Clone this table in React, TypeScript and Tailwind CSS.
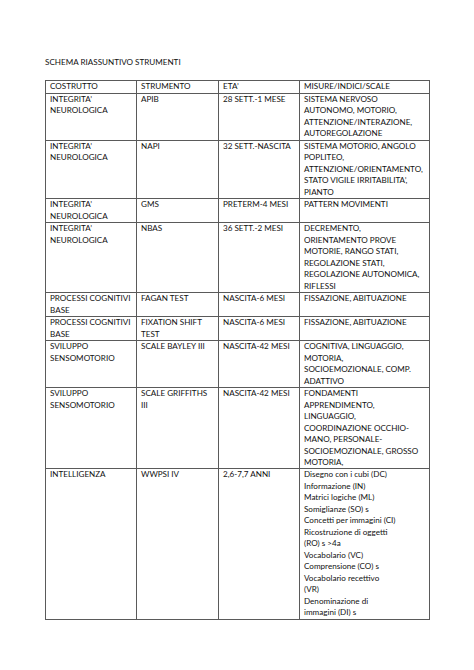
const rows: [string[], string[], string[], string[]][] = [
  [["INTEGRITA’", "NEUROLOGICA"], ["APIB"], ["28 SETT.-1 MESE"], ["SISTEMA NERVOSO", "AUTONOMO, MOTORIO,", "ATTENZIONE/INTERAZIONE,", "AUTOREGOLAZIONE"]],
  [["INTEGRITA’", "NEUROLOGICA"], ["NAPI"], ["32 SETT.-NASCITA"], ["SISTEMA MOTORIO, ANGOLO", "POPLITEO,", "ATTENZIONE/ORIENTAMENTO,", "STATO VIGILE IRRITABILITA’,", "PIANTO"]],
  [["INTEGRITA’", "NEUROLOGICA"], ["GMS"], ["PRETERM-4 MESI"], ["PATTERN MOVIMENTI"]],
  [["INTEGRITA’", "NEUROLOGICA"], ["NBAS"], ["36 SETT.-2 MESI"], ["DECREMENTO,", "ORIENTAMENTO PROVE", "MOTORIE, RANGO STATI,", "REGOLAZIONE STATI,", "REGOLAZIONE AUTONOMICA,", "RIFLESSI"]],
  [["PROCESSI COGNITIVI", "BASE"], ["FAGAN TEST"], ["NASCITA-6 MESI"], ["FISSAZIONE, ABITUAZIONE"]],
  [["PROCESSI COGNITIVI", "BASE"], ["FIXATION SHIFT", "TEST"], ["NASCITA-6 MESI"], ["FISSAZIONE, ABITUAZIONE"]],
  [["SVILUPPO", "SENSOMOTORIO"], ["SCALE BAYLEY III"], ["NASCITA-42 MESI"], ["COGNITIVA, LINGUAGGIO,", "MOTORIA,", "SOCIOEMOZIONALE, COMP.", "ADATTIVO"]],
  [["SVILUPPO", "SENSOMOTORIO"], ["SCALE GRIFFITHS", "III"], ["NASCITA-42 MESI"], ["FONDAMENTI", "APPRENDIMENTO,", "LINGUAGGIO,", "COORDINAZIONE OCCHIO-", "MANO, PERSONALE-", "SOCIOEMOZIONALE, GROSSO", "MOTORIA,"]],
  [["INTELLIGENZA"], ["WWPSI IV"], ["2,6-7,7 ANNI"], ["Disegno con i cubi (DC)", "Informazione (IN)", "Matrici logiche (ML)", "Somiglianze (SO) s", "Concetti per immagini (CI)", "Ricostruzione di oggetti", "(RO) s >4a", "Vocabolario (VC)", "Comprensione (CO) s", "Vocabolario recettivo", "(VR)", "Denominazione di", "immagini (DI) s"]],
];

function Cell({ lines }: { lines: string[] }) {
  return (
    <td className="border border-[#5a5a5a] px-[4px] py-0 align-top">
      {lines.map((l, i) => (
        <div key={i} className="whitespace-nowrap">{l}</div>
      ))}
    </td>
  );
}

export default function App() {
  return (
    <div className="h-[670px] w-[474px] bg-white font-['Lato',sans-serif] text-[8.1px] leading-[11.48px] text-[#111]">
      <div className="pl-[45px] pt-[57px]">SCHEMA RIASSUNTIVO STRUMENTI</div>
      <table className="ml-[45px] mt-[12px] w-[384px] table-fixed border-collapse">
        <colgroup>
          <col className="w-[91px]" />
          <col className="w-[82px]" />
          <col className="w-[81px]" />
          <col className="w-[130px]" />
        </colgroup>
        <tbody>
          <tr>
            <Cell lines={["COSTRUTTO"]} />
            <Cell lines={["STRUMENTO"]} />
            <Cell lines={["ETA’"]} />
            <Cell lines={["MISURE/INDICI/SCALE"]} />
          </tr>
          {rows.map((r, i) => (
            <tr key={i}>
              {r.map((c, j) => (
                <Cell key={j} lines={c} />
              ))}
            </tr>
          ))}
        </tbody>
      </table>
    </div>
  );
}
